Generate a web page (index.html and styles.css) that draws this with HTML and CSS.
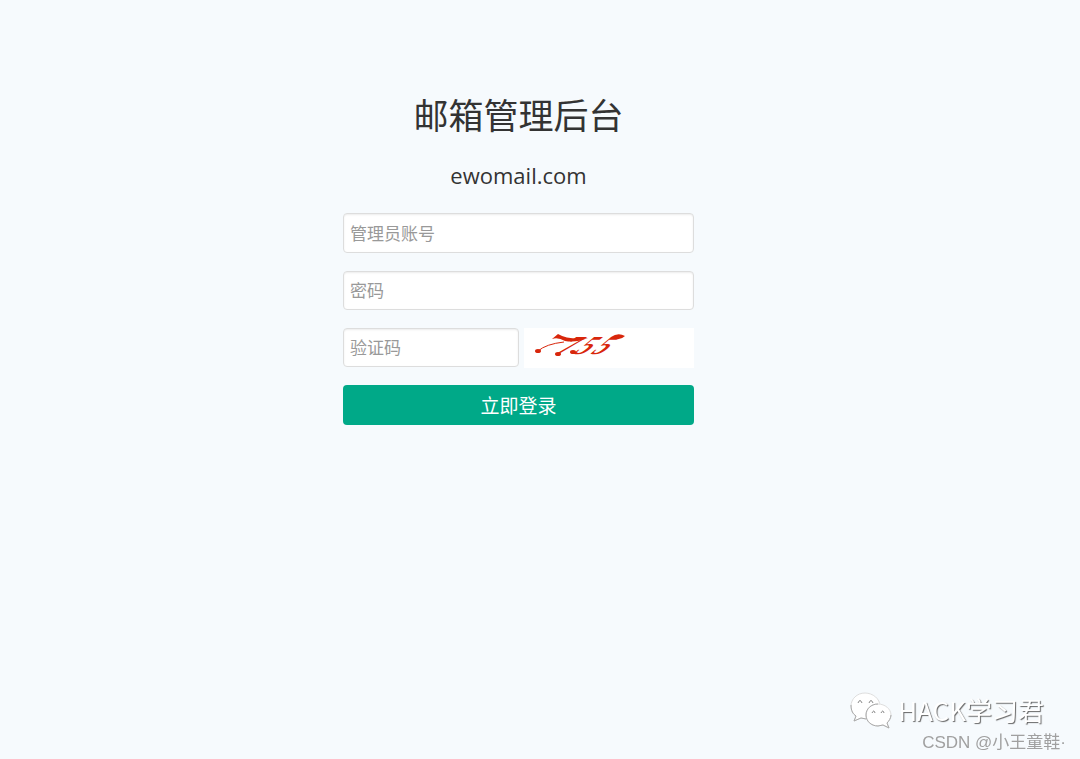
FILE: index.html
```html
<!DOCTYPE html>
<html lang="zh-CN">
<head>
  <meta charset="UTF-8" />
  <meta name="viewport" content="width=device-width, initial-scale=1.0"/>
  <title>邮箱管理后台</title>
  <link rel="stylesheet" href="styles.css">
</head>
<body>

  <main class="login">
    <h1 class="title">邮箱管理后台</h1>
    <p class="domain">ewomail.com</p>

    <form class="login-form">
      <input class="field" type="text" name="username" placeholder="管理员账号" aria-label="管理员账号">
      <input class="field" type="password" name="password" placeholder="密码" aria-label="密码">
      <div class="code-row">
        <input class="field" type="text" name="code" placeholder="验证码" aria-label="验证码">
        <svg class="captcha" viewBox="0 0 170 40" role="img" aria-label="755">
          <g class="captcha-text">
            <text transform="translate(29 26) skewX(-52)">7</text>
            <text transform="translate(48 26) skewX(-50)">5</text>
            <text transform="translate(65 26) skewX(-50)">5</text>
          </g>
          <!-- noise -->
          <g class="captcha-noise">
            <path class="line" d="M14 23Q22 16 40 14"/>
            <path d="M28 11L34 6Q44 12 64 10Q52 15 41 13Q34 9 28 11z"/>
            <path d="M87 9Q94 4 101 8Q95 14 87 9z"/>
            <ellipse cx="14" cy="23" rx="3" ry="2"/>
            <ellipse cx="34" cy="26" rx="3" ry="2"/>
            <ellipse cx="49" cy="24" rx="3" ry="2"/>
          </g>
        </svg>
      </div>
      <button class="submit" type="submit">立即登录</button>
    </form>
  </main>

  <div class="watermark">
    <div class="account">
      <svg class="wechat" viewBox="0 0 42 38" aria-hidden="true">
        <path class="bubble" d="M15 2C7 2 1 8 1 15c0 5 2 8 5 10l-2 5 7-3c12 3 19-3 19-12C30 8 23 2 15 2z"/>
        <path class="edge" d="M1 14c0 6 2 9 5 11l-2 5 7-3 5 1"/>
        <path class="eye" d="M8 12q2-5 4 0M19 12q2-5 4 0"/>
        <path class="bubble" d="M28 13c-7 0-12 5-12 11s5 11 12 11l5-1 6 3-2-5c2-2 4-5 4-8 0-6-6-11-13-11z"/>
        <path class="edge" d="M28 13c-7 0-12 5-12 11s5 11 12 11l5-1 6 3-2-5c2-2 4-5 4-8"/>
        <path class="eye" d="M22 22q2-4 3 0M31 22q2-4 3 0"/>
      </svg>
      <span>HACK学习君</span>
    </div>
    <div class="author">CSDN @小王童鞋·</div>
  </div>

</body>
</html>
```
FILE: styles.css
```css
* { box-sizing: border-box; margin: 0; padding: 0; }

body {
  min-height: 100vh;
  padding: 92px 43px 0 0;
  background-color: #f6fafd;
  color: #333;
  font-family: "Open Sans", "Noto Sans CJK SC", sans-serif;
}

.login {
  width: 100%;
  max-width: 351px;
  margin: 0 auto;
  text-align: center;
}

.title {
  font-size: 35px;
  font-weight: 400;
  line-height: 48px;
}

.domain {
  margin: 19px 0 22px;
  font-size: 22px;
  line-height: 32px;
}

.login-form {
  display: flex;
  flex-direction: column;
  gap: 18px;
}

.field {
  width: 100%;
  height: 40px;
  padding: 0 6px;
  border: 1px solid #ddd;
  border-radius: 4px;
  background-color: #fff;
  box-shadow: inset 0 1px 2px rgba(0, 0, 0, 0.08);
  font-family: inherit;
  font-size: 17px;
}

.field::placeholder { color: #999; }

.code-row {
  display: flex;
  gap: 5px;
}

.code-row .field { flex: 1; min-width: 0; }

.code-row,
.code-row .field,
.field[type="password"] { height: 39px; }

.captcha {
  width: 170px;
  height: 40px;
  background-color: #fff;
}

.captcha-text {
  fill: #d8260b;
  font-family: "Liberation Serif", serif;
  font-size: 26px;
  font-weight: bold;
}

.captcha-noise { fill: #d8260b; }

.captcha-noise .line {
  fill: none;
  stroke: #d8260b;
  stroke-width: 1;
}

.submit {
  height: 40px;
  border: none;
  border-radius: 4px;
  background-color: #00a988;
  color: #fff;
  font-family: inherit;
  font-size: 19px;
  cursor: pointer;
}

.watermark {
  position: fixed;
  right: 14px;
  bottom: 4px;
  text-align: right;
}

.account {
  display: flex;
  align-items: center;
  justify-content: flex-end;
  gap: 6px;
  margin-bottom: 2px;
  padding-right: 22px;
  color: #fff;
  font-family: "Noto Sans CJK SC", sans-serif;
  font-size: 26px;
  line-height: 38px;
  text-shadow: 1px 1px 1px #666;
}

.wechat {
  width: 42px;
  height: 38px;
}

.bubble {
  fill: #fff;
  stroke: #ddd;
  stroke-width: 1;
}

.edge {
  fill: none;
  stroke: #aaa;
  stroke-width: 1;
}

.eye {
  fill: none;
  stroke: #888;
  stroke-width: 1;
}

.author {
  color: #a0a0a0;
  font-family: "Liberation Sans", "Noto Sans CJK SC", sans-serif;
  font-size: 17px;
  line-height: 24px;
}
```
